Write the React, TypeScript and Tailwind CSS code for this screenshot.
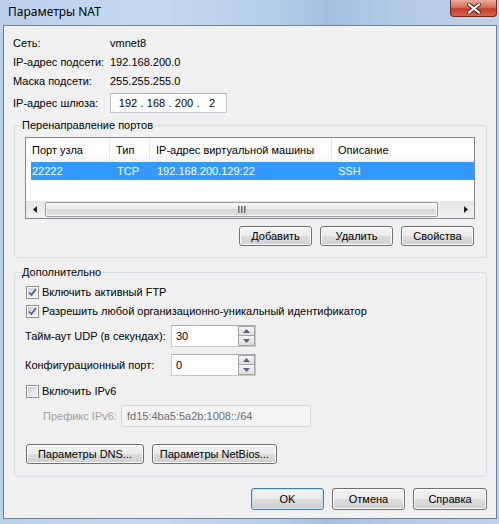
import type { ReactNode } from 'react';

function Btn({ children, className = '', def = false }: { children: ReactNode; className?: string; def?: boolean }) {
  return (
    <div
      className={`flex items-center justify-center rounded-[3px] border leading-none ${
        def
          ? 'border-[#3c7fb1] shadow-[inset_0_0_0_1px_#bfe6f9]'
          : 'border-[#707070] shadow-[inset_0_0_0_1px_#fbfbfb]'
      } bg-[linear-gradient(#f2f2f2_0%,#ebebeb_50%,#dddddd_50%,#cfcfcf_100%)] ${className}`}
    >
      {children}
    </div>
  );
}

function CheckBox({ checked }: { checked: boolean }) {
  return (
    <div className="w-[13px] h-[13px] shrink-0 border border-[#8e8f8f] bg-white p-[1px]">
      <div className="w-full h-full bg-[linear-gradient(135deg,#cbcfd5,#f6f6f6)] flex items-center justify-center">
        {checked && (
          <svg width="9" height="9" viewBox="0 0 9 9">
            <path d="M1 4.5 L3.5 7 L8 1" fill="none" stroke="#4a5f97" strokeWidth="1.7" />
          </svg>
        )}
      </div>
    </div>
  );
}

function Spin({ value }: { value: string }) {
  return (
    <div className="w-[85px] h-[22px] flex border border-[#c4c8ce] border-t-[#abadb3] bg-white">
      <span className="flex-1 pl-[4px] pt-[3px] leading-[14px]">{value}</span>
      <div className="w-[17px] flex flex-col my-[0px] mr-[0px]">
        <div className="h-1/2 border border-[#a3a3a3] bg-[linear-gradient(#f6f6f6,#dedede)] flex items-center justify-center">
          <svg width="7" height="4" viewBox="0 0 7 4"><path d="M0 4 L3.5 0 L7 4Z" fill="#4f6290" /></svg>
        </div>
        <div className="h-1/2 border border-t-0 border-[#a3a3a3] bg-[linear-gradient(#f6f6f6,#dedede)] flex items-center justify-center">
          <svg width="7" height="4" viewBox="0 0 7 4"><path d="M0 0 L3.5 4 L7 0Z" fill="#4f6290" /></svg>
        </div>
      </div>
    </div>
  );
}

function GroupBox({ title, className = '', children }: { title: string; className?: string; children: ReactNode }) {
  return (
    <div className={`relative ml-[10px] w-[473px] border border-[#d5dfe5] rounded-[3px] ${className}`}>
      <span className="absolute left-[6px] -top-[8px] px-[1px] bg-[#f0f0f0] leading-[14px]">{title}</span>
      {children}
    </div>
  );
}

const cols = [
  { w: 'w-[84px]', head: 'Порт узла', cell: '22222' },
  { w: 'w-[40px]', head: 'Тип', cell: 'TCP' },
  { w: 'w-[182px]', head: 'IP-адрес виртуальной машины', cell: '192.168.200.129:22' },
  { w: 'w-[142px]', head: 'Описание', cell: 'SSH' },
];

export default function App() {
  return (
    <div className="w-[499px] h-[524px] flex flex-col overflow-hidden text-[11px] text-black font-['Liberation_Sans',Arial,sans-serif] bg-[linear-gradient(90deg,#b9d0ea_0%,#c6daef_30%,#b5cde8_55%,#a4bfdf_66%,#b4cbe6_80%,#bdd2ea_100%)]">
      {/* title bar */}
      <div className="h-[25px] shrink-0 flex items-start justify-between">
        <span className="pl-[8px] pt-[3px] leading-[17px] text-[12px] font-['Noto_Sans',sans-serif]">Параметры NAT</span>
        <div className="mr-[2px] w-[47px] h-[17px] rounded-b-[4px] border border-t-0 border-[#6b2b25] bg-[linear-gradient(#e9a99a_0%,#d6705c_45%,#c2412a_55%,#d8664a_100%)] flex items-center justify-center">
          <svg width="14" height="11" viewBox="0 0 14 11">
            <path d="M2 1.5 L12 9.5 M12 1.5 L2 9.5" stroke="#4a2420" strokeWidth="4" strokeLinecap="square" />
            <path d="M2 1.5 L12 9.5 M12 1.5 L2 9.5" stroke="#ffffff" strokeWidth="2" strokeLinecap="square" />
          </svg>
        </div>
      </div>

      {/* client */}
      <div className="ml-[3px] mr-[2px] h-[494px] shrink-0 flex flex-col border border-[#6e7f94] bg-[#f0f0f0]">
        <div className="pt-[8px] pl-[9px] flex flex-col gap-[1px]">
          <div className="h-[18px] flex items-center"><span className="w-[97px]">Сеть:</span><span>vmnet8</span></div>
          <div className="h-[18px] flex items-center"><span className="w-[97px]">IP-адрес подсети:</span><span>192.168.200.0</span></div>
          <div className="h-[18px] flex items-center"><span className="w-[97px]">Маска подсети:</span><span>255.255.255.0</span></div>
        </div>
        <div className="mt-[3px] pl-[9px] h-[20px] flex items-center">
          <span className="w-[97px]">IP-адрес шлюза:</span>
          <div className="w-[117px] h-[20px] flex items-center border border-[#c4c8ce] border-t-[#abadb3] bg-white pl-[6px]">
            <span className="w-[22px] text-center">192</span>
            <span className="w-[6px] text-center">.</span>
            <span className="w-[22px] text-center">168</span>
            <span className="w-[6px] text-center">.</span>
            <span className="w-[22px] text-center">200</span>
            <span className="w-[6px] text-center">.</span>
            <span className="w-[22px] text-center">2</span>
          </div>
        </div>

        <GroupBox title="Перенаправление портов" className="mt-[12px]">
          <div className="ml-[10px] mt-[11px] w-[450px] h-[82px] border border-[#828790] bg-white flex flex-col">
            <div className="h-[24px] shrink-0 flex bg-[linear-gradient(#ffffff_0%,#ffffff_60%,#f3f4f6_100%)]">
              {cols.map((c) => (
                <div key={c.head} className={`${c.w} shrink-0 h-full flex items-center pl-[6px] border-r border-[#e3e5e8] last:border-r-0`}>
                  {c.head}
                </div>
              ))}
            </div>
            <div className="ml-[5px] mr-[0px] h-[18px] shrink-0 flex items-center bg-[#3399ff] text-white">
              <span className="w-[79px] pl-[1px]">22222</span>
              <span className="w-[40px] pl-[7px]">TCP</span>
              <span className="w-[182px] pl-[7px]">192.168.200.129:22</span>
              <span className="pl-[6px]">SSH</span>
            </div>
            <div className="flex-1" />
            <div className="h-[17px] shrink-0 flex items-center bg-[linear-gradient(#e5e5e5,#f2f2f2)]">
              <div className="w-[17px] h-full flex items-center justify-center">
                <svg width="4" height="7" viewBox="0 0 4 7"><path d="M4 0 L0 3.5 L4 7Z" fill="#222" /></svg>
              </div>
              <div className="ml-[2px] w-[393px] h-[15px] rounded-[2px] border border-[#9c9c9c] bg-[linear-gradient(#f6f6f6_0%,#e9e9e9_50%,#d7d7d7_50%,#dedede_100%)] shadow-[inset_0_0_0_1px_#f8f8f8] flex items-center justify-center gap-[1px]">
                <span className="w-[2px] h-[7px] bg-[linear-gradient(90deg,#555,#bbb)]" />
                <span className="w-[2px] h-[7px] bg-[linear-gradient(90deg,#555,#bbb)]" />
                <span className="w-[2px] h-[7px] bg-[linear-gradient(90deg,#555,#bbb)]" />
              </div>
              <div className="flex-1" />
              <div className="w-[17px] h-full flex items-center justify-center">
                <svg width="4" height="7" viewBox="0 0 4 7"><path d="M0 0 L4 3.5 L0 7Z" fill="#222" /></svg>
              </div>
            </div>
          </div>
          <div className="mt-[7px] pb-[11px] pr-[12px] flex justify-end gap-[8px]">
            <Btn className="w-[73px] h-[20px]">Добавить</Btn>
            <Btn className="w-[73px] h-[20px]">Удалить</Btn>
            <Btn className="w-[73px] h-[20px]">Свойства</Btn>
          </div>
        </GroupBox>

        <GroupBox title="Дополнительно" className="mt-[14px]">
          <div className="pt-[10px] pb-[12px] flex flex-col">
            <div className="h-[19px] pl-[11px] flex items-center gap-[3px]">
              <CheckBox checked />
              <span>Включить активный FTP</span>
            </div>
            <div className="h-[19px] pl-[11px] flex items-center gap-[3px]">
              <CheckBox checked />
              <span>Разрешить любой организационно-уникальный идентификатор</span>
            </div>
            <div className="mt-[4px] pl-[10px] flex items-center">
              <span className="w-[146px]">Тайм-аут UDP (в секундах):</span>
              <Spin value="30" />
            </div>
            <div className="mt-[7px] pl-[10px] flex items-center">
              <span className="w-[146px]">Конфигурационный порт:</span>
              <Spin value="0" />
            </div>
            <div className="mt-[6px] h-[19px] pl-[11px] flex items-center gap-[3px]">
              <CheckBox checked={false} />
              <span>Включить IPv6</span>
            </div>
            <div className="mt-[4px] pl-[28px] flex items-center">
              <span className="w-[78px] text-[#a0a0a0]">Префикс IPv6:</span>
              <div className="w-[190px] h-[22px] flex items-center pl-[5px] rounded-[2px] border border-[#d2d2d2] bg-[#f4f4f4] text-[#6d6d6d]">
                fd15:4ba5:5a2b:1008::/64
              </div>
            </div>
            <div className="mt-[17px] pl-[11px] flex gap-[8px]">
              <Btn className="w-[118px] h-[20px]">Параметры DNS...</Btn>
              <Btn className="w-[125px] h-[20px]">Параметры NetBios...</Btn>
            </div>
          </div>
        </GroupBox>

        <div className="mt-[11px] pr-[9px] flex justify-end gap-[8px]">
          <Btn def className="w-[73px] h-[22px]">OK</Btn>
          <Btn className="w-[73px] h-[22px]">Отмена</Btn>
          <Btn className="w-[74px] h-[22px]">Справка</Btn>
        </div>
      </div>
    </div>
  );
}
